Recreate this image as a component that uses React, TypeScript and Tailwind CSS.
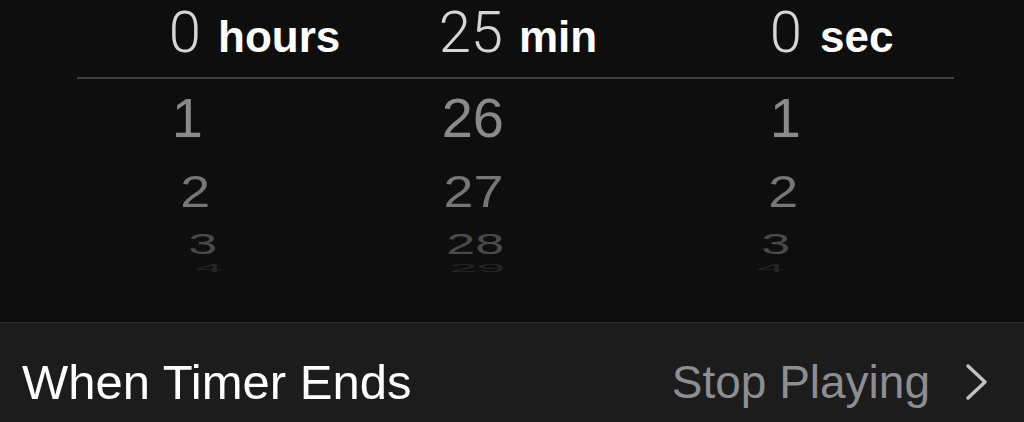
import React from "react";

type Column = {
  value: string;
  unit: string;
  colW: string;
  numW: string;
  unitGap: string;
  wheel: string[];
  shifts: string[];
};

const columns: Column[] = [
  {
    value: "0",
    unit: "hours",
    colW: "w-[280px]",
    numW: "w-[81px]",
    unitGap: "ml-[17px]",
    wheel: ["1", "2", "3", "4"],
    shifts: ["translate-x-[2px]", "translate-x-[9px]", "translate-x-[16px]", "translate-x-[22px]"],
  },
  {
    value: "25",
    unit: "min",
    colW: "w-[300px]",
    numW: "w-[103px]",
    unitGap: "ml-[16px]",
    wheel: ["26", "27", "28", "29"],
    shifts: ["translate-x-[1px]", "translate-x-[0px]", "translate-x-[1px]", "translate-x-[2px]"],
  },
  {
    value: "0",
    unit: "sec",
    colW: "w-[324px]",
    numW: "w-[102px]",
    unitGap: "ml-[18px]",
    wheel: ["1", "2", "3", "4"],
    shifts: ["-translate-x-[1px]", "-translate-x-[4px]", "-translate-x-[12px]", "-translate-x-[17px]"],
  },
];

// Rows below the selection, tilting away like a drum.
const wheelRows = [
  { h: "h-[78px] leading-[78px]", color: "text-[#8a8a8a]", scale: "scale-x-100 scale-y-100" },
  { h: "h-[69px] leading-[69px]", color: "text-[#767676]", scale: "scale-x-[0.96] scale-y-[0.8]" },
  { h: "h-[36px] leading-[36px]", color: "text-[#4a4a4a]", scale: "scale-x-[0.93] scale-y-[0.52]" },
  { h: "h-[13px] leading-[13px]", color: "text-[#262626]", scale: "scale-x-[0.9] scale-y-[0.18]" },
];

function Chevron() {
  return (
    <svg width="24" height="36" viewBox="0 0 24 36" fill="none" className="ml-[34px] shrink-0">
      <polyline
        points="4,2 21,18 4,34"
        stroke="#c2c2c4"
        strokeWidth="3.4"
        strokeLinecap="round"
        strokeLinejoin="round"
      />
    </svg>
  );
}

export default function App() {
  return (
    <div className="w-[1024px] h-[422px] overflow-hidden bg-[#0e0e0e] flex flex-col font-['Liberation_Sans',Arial,sans-serif]">
      {/* Timer picker */}
      <div className="h-[322px] shrink-0 flex flex-col">
        <div className="h-[65px] flex pl-[120px]">
          {columns.map((c) => (
            <div key={c.unit} className={`${c.colW} flex items-baseline`}>
              <span className={`${c.numW} text-right text-[58px] leading-[65px] font-light text-[#d6d6d6] font-['Roboto',sans-serif]`}>
                {c.value}
              </span>
              <span className={`${c.unitGap} text-[44px] leading-[65px] font-bold text-white`}>{c.unit}</span>
            </div>
          ))}
        </div>
        <div className="mt-[12px] ml-[77px] w-[877px] h-[2px] bg-[#3f3f3f]" />
        <div className="flex pl-[120px]">
          {columns.map((c) => (
            <div key={c.unit} className={`${c.colW} flex flex-col`}>
              {c.wheel.map((v, i) => (
                <div key={v} className={`${c.numW} ${wheelRows[i].h} text-right overflow-visible`}>
                  <span
                    className={`inline-block origin-right text-[56px] ${wheelRows[i].color} ${wheelRows[i].scale} ${c.shifts[i]}`}
                  >
                    {v}
                  </span>
                </div>
              ))}
            </div>
          ))}
        </div>
      </div>

      {/* Settings row */}
      <div className="flex-1 bg-[#1c1c1d] border-t border-[#2b2b2b]">
        <div className="flex items-center pl-[22px] pr-[36px] pt-[35px]">
          <span className="text-[49px] leading-[48px] text-white">When Timer Ends</span>
          <span className="ml-auto text-[46px] leading-[48px] text-[#8e8e92]">Stop Playing</span>
          <Chevron />
        </div>
      </div>
    </div>
  );
}
